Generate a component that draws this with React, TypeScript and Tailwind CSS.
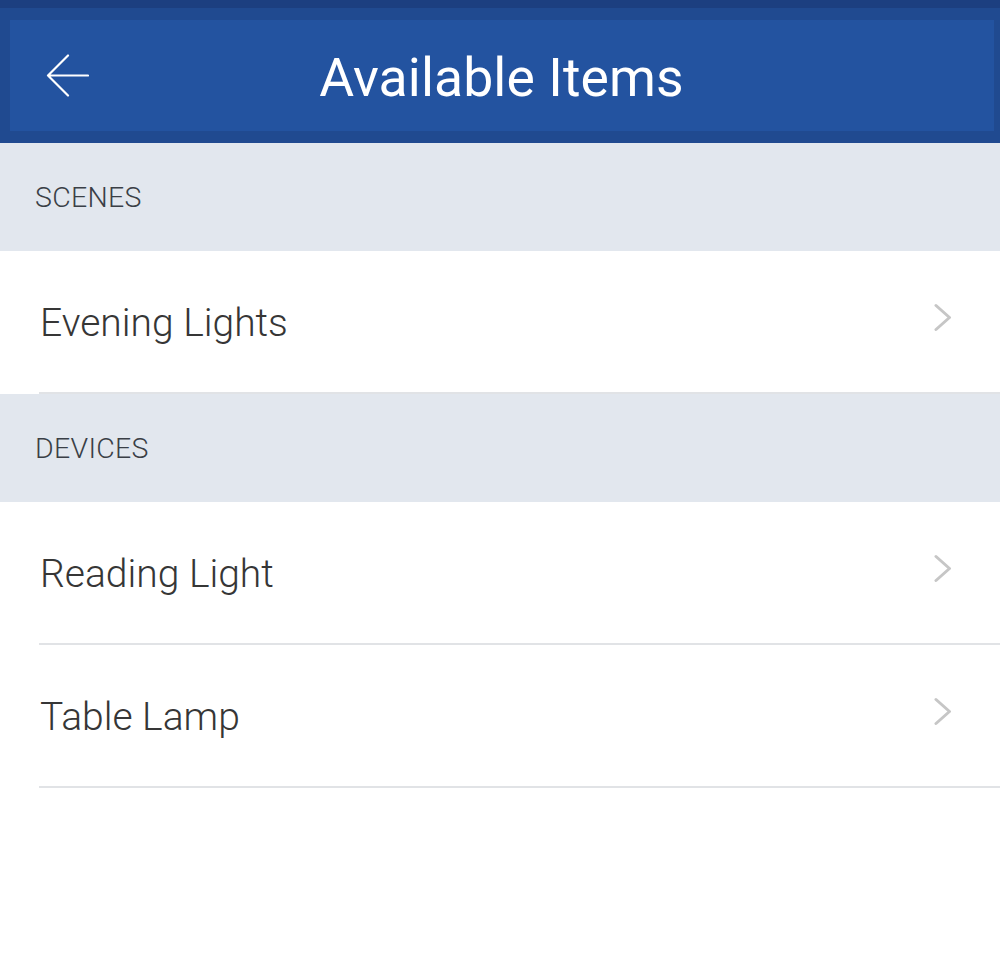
const sections = [
  { title: "SCENES", items: ["Evening Lights"] },
  { title: "DEVICES", items: ["Reading Light", "Table Lamp"] },
];

function Chevron() {
  return (
    <svg
      className="mb-[8px]"
      width="18"
      height="29"
      viewBox="0 0 18 29"
      fill="none"
      stroke="#c6c6c6"
      strokeWidth="3"
      strokeLinecap="round"
      strokeLinejoin="round"
    >
      <path d="M2 2.5L15.5 14.5L2 26.5" />
    </svg>
  );
}

export default function App() {
  return (
    <div className="w-[1000px] h-[967px] bg-white font-['Roboto',sans-serif]">
      {/* Top bar */}
      <div className="h-[143px] bg-[#204a90] border-t-8 border-[#1c3f80] pt-3 pb-3 pl-[10px] pr-[6px]">
        <div className="relative h-[111px] bg-[#2353a0] flex items-center justify-center">
          <svg
            className="absolute left-[36px] top-[34px]"
            width="43"
            height="43"
            viewBox="0 0 43 43"
            fill="none"
            stroke="white"
            strokeWidth="2.2"
            strokeLinecap="round"
            strokeLinejoin="round"
          >
            <path d="M42 21.5H2M22 1.5L2 21.5L22 41.5" />
          </svg>
          <h1 className="text-[53.5px] text-white font-normal tracking-[0.1px] leading-none -ml-[1px] mt-[5px]">
            Available Items
          </h1>
        </div>
      </div>

      {sections.map((section) => (
        <div key={section.title}>
          <div className="h-[108px] bg-[#e2e7ee] flex items-center pl-[35px]">
            <span className="text-[28.5px] text-[#3a3f46] font-light tracking-[0.3px] mt-[2px]">
              {section.title}
            </span>
          </div>
          {section.items.map((item) => (
            <div key={item} className="h-[143px] flex flex-col">
              <div className="flex-1 flex items-center justify-between pl-[40px] pr-[48px]">
                <span className="text-[39px] text-[#363636] font-light mt-[3px]">{item}</span>
                <Chevron />
              </div>
              <div className="ml-[39px] h-[2px] bg-[#e1e3e6]" />
            </div>
          ))}
        </div>
      ))}
    </div>
  );
}
